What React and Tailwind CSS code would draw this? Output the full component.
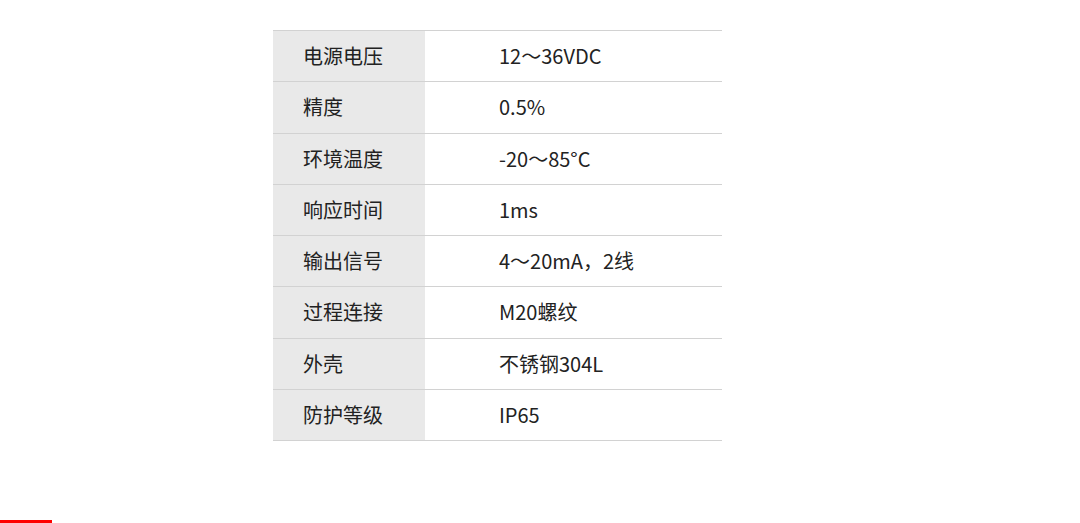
const rows = [
  ["电源电压", "12～36VDC"],
  ["精度", "0.5%"],
  ["环境温度", "-20～85°C"],
  ["响应时间", "1ms"],
  ["输出信号", "4～20mA，2线"],
  ["过程连接", "M20螺纹"],
  ["外壳", "不锈钢304L"],
  ["防护等级", "IP65"],
];

export default function App() {
  return (
    <div
      className="relative w-[1080px] h-[523px] bg-white overflow-hidden"
      style={{ fontFamily: '"Noto Sans CJK SC", "Noto Sans", sans-serif' }}
    >
      <div className="pt-[30px] pl-[273px]">
        <div className="w-[449px] border-t border-[#d2d2d2]">
          {rows.map(([k, v]) => (
            <div key={k} className="flex h-[51.25px] border-b border-[#d2d2d2] text-[20px] text-[#222]">
              <div className="w-[152px] bg-[#e9e9e9] flex items-center pl-[30px]">{k}</div>
              <div className="flex-1 flex items-center pl-[74px]">{v}</div>
            </div>
          ))}
        </div>
      </div>
      <div className="absolute left-0 bottom-0 w-[52px] h-[3px] bg-[#ff0000]" />
    </div>
  );
}
